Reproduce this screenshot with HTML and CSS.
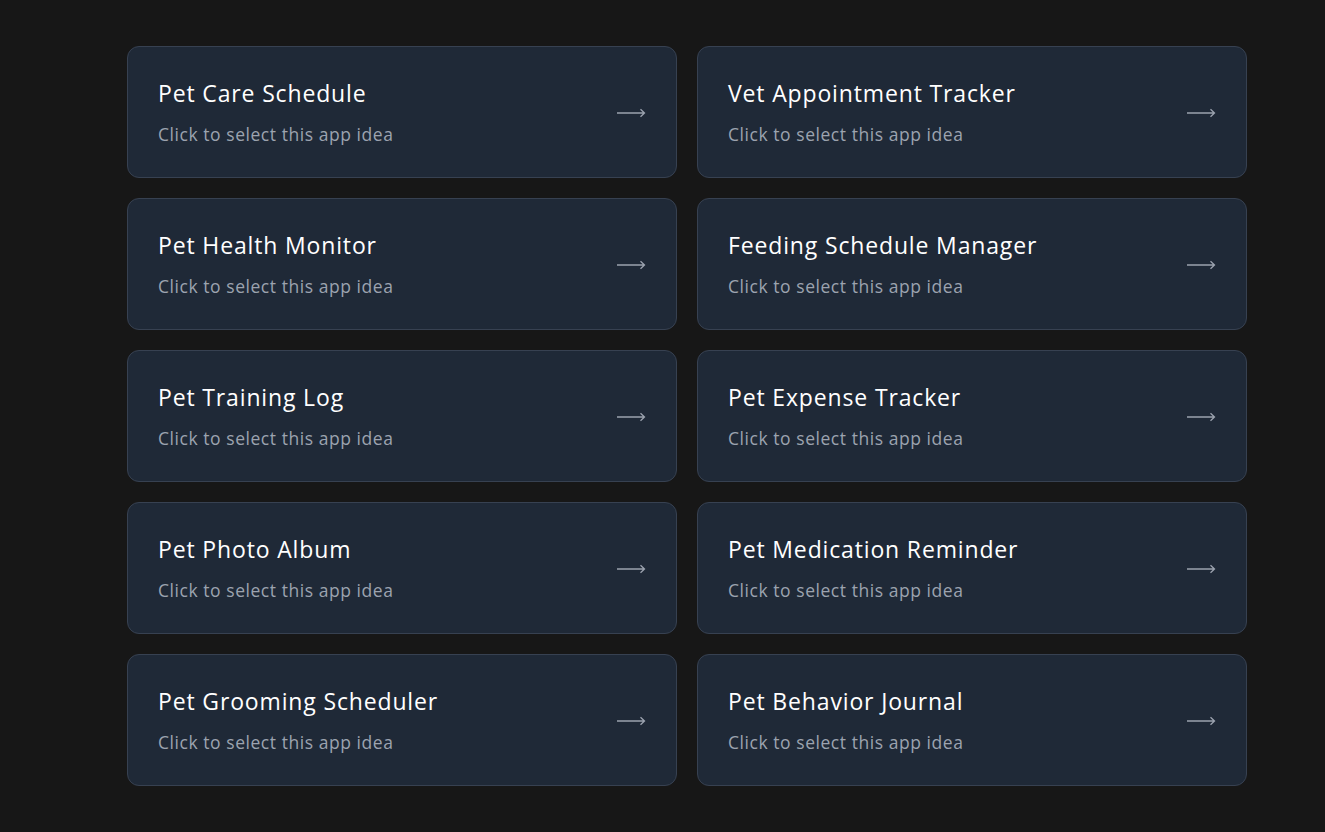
FILE: index.html
```html
<!DOCTYPE html>
<html lang="en">
<head>
<meta charset="utf-8">
<title>App ideas</title>
<link rel="stylesheet" href="styles.css">
</head>
<body>
<main class="page">
  <div class="grid">
    <div class="card"><div class="text"><div class="title">Pet Care Schedule</div><div class="sub">Click to select this app idea</div></div><svg class="arrow" width="30" height="10" viewBox="0 0 30 10"><path d="M1 5H28.5M24.5 1.2L28.5 5L24.5 8.8" fill="none" stroke="#9ca3af" stroke-width="1.3"/></svg></div>
    <div class="card"><div class="text"><div class="title">Vet Appointment Tracker</div><div class="sub">Click to select this app idea</div></div><svg class="arrow" width="30" height="10" viewBox="0 0 30 10"><path d="M1 5H28.5M24.5 1.2L28.5 5L24.5 8.8" fill="none" stroke="#9ca3af" stroke-width="1.3"/></svg></div>
    <div class="card"><div class="text"><div class="title">Pet Health Monitor</div><div class="sub">Click to select this app idea</div></div><svg class="arrow" width="30" height="10" viewBox="0 0 30 10"><path d="M1 5H28.5M24.5 1.2L28.5 5L24.5 8.8" fill="none" stroke="#9ca3af" stroke-width="1.3"/></svg></div>
    <div class="card"><div class="text"><div class="title">Feeding Schedule Manager</div><div class="sub">Click to select this app idea</div></div><svg class="arrow" width="30" height="10" viewBox="0 0 30 10"><path d="M1 5H28.5M24.5 1.2L28.5 5L24.5 8.8" fill="none" stroke="#9ca3af" stroke-width="1.3"/></svg></div>
    <div class="card"><div class="text"><div class="title">Pet Training Log</div><div class="sub">Click to select this app idea</div></div><svg class="arrow" width="30" height="10" viewBox="0 0 30 10"><path d="M1 5H28.5M24.5 1.2L28.5 5L24.5 8.8" fill="none" stroke="#9ca3af" stroke-width="1.3"/></svg></div>
    <div class="card"><div class="text"><div class="title">Pet Expense Tracker</div><div class="sub">Click to select this app idea</div></div><svg class="arrow" width="30" height="10" viewBox="0 0 30 10"><path d="M1 5H28.5M24.5 1.2L28.5 5L24.5 8.8" fill="none" stroke="#9ca3af" stroke-width="1.3"/></svg></div>
    <div class="card"><div class="text"><div class="title">Pet Photo Album</div><div class="sub">Click to select this app idea</div></div><svg class="arrow" width="30" height="10" viewBox="0 0 30 10"><path d="M1 5H28.5M24.5 1.2L28.5 5L24.5 8.8" fill="none" stroke="#9ca3af" stroke-width="1.3"/></svg></div>
    <div class="card"><div class="text"><div class="title">Pet Medication Reminder</div><div class="sub">Click to select this app idea</div></div><svg class="arrow" width="30" height="10" viewBox="0 0 30 10"><path d="M1 5H28.5M24.5 1.2L28.5 5L24.5 8.8" fill="none" stroke="#9ca3af" stroke-width="1.3"/></svg></div>
    <div class="card"><div class="text"><div class="title">Pet Grooming Scheduler</div><div class="sub">Click to select this app idea</div></div><svg class="arrow" width="30" height="10" viewBox="0 0 30 10"><path d="M1 5H28.5M24.5 1.2L28.5 5L24.5 8.8" fill="none" stroke="#9ca3af" stroke-width="1.3"/></svg></div>
    <div class="card"><div class="text"><div class="title">Pet Behavior Journal</div><div class="sub">Click to select this app idea</div></div><svg class="arrow" width="30" height="10" viewBox="0 0 30 10"><path d="M1 5H28.5M24.5 1.2L28.5 5L24.5 8.8" fill="none" stroke="#9ca3af" stroke-width="1.3"/></svg></div>
  </div>
</main>
</body>
</html>
```

FILE: styles.css
```css
html, body {
  margin: 0;
  padding: 0;
  background: #171717;
  height: 100%;
}
body {
  font-family: "Open Sans", "Noto Sans", "Liberation Sans", sans-serif;
  color: #ffffff;
}
.page {
  padding: 46px 78px 46px 127px;
}
.grid {
  width: 1120px;
  display: grid;
  grid-template-columns: 1fr 1fr;
  gap: 20px;
}
.card {
  box-sizing: border-box;
  height: 132px;
  background: #1f2937;
  border: 1px solid #374151;
  border-radius: 12px;
  padding: 0 30px;
  display: flex;
  align-items: center;
  justify-content: space-between;
}
.text {
  display: flex;
  flex-direction: column;
  gap: 13px;
}
.title {
  font-size: 23px;
  font-weight: 500;
  line-height: 30px;
  color: #ffffff;
  letter-spacing: 0.85px;
}
.sub {
  font-size: 17.5px;
  line-height: 26px;
  color: #9ca3af;
  letter-spacing: 0.55px;
}
.arrow {
  display: block;
  margin-top: 1px;
}
```
